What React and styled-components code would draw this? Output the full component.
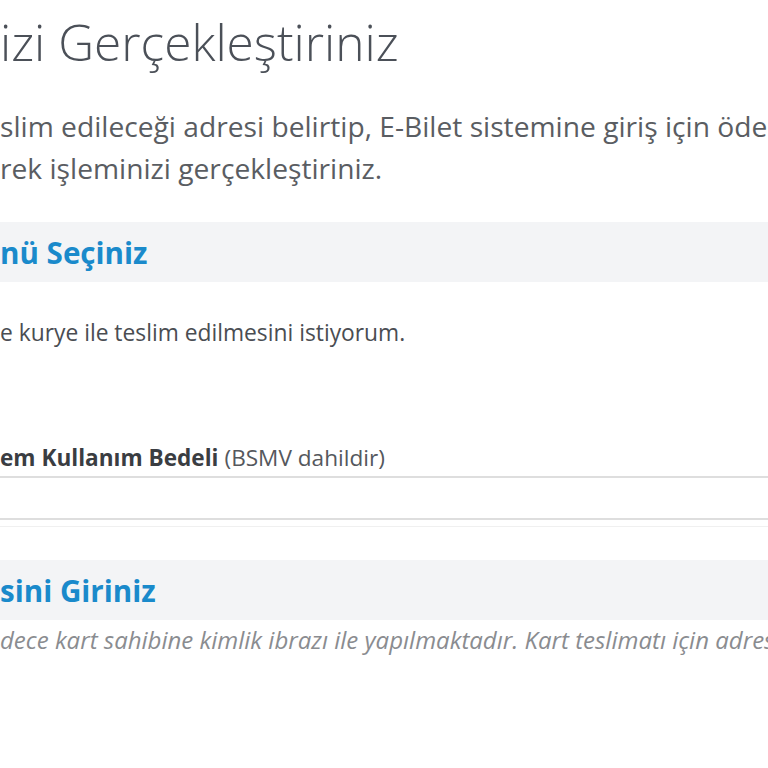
import styled, { createGlobalStyle } from 'styled-components'

const Global = createGlobalStyle`
  html, body { margin: 0; padding: 0; background: #fff; }
  body { font-family: "Open Sans", "Noto Sans", sans-serif; }
`;

const App = () => {
  return (
    <>
      <Global />
      <Page>
        <Title>izi Gerçekleştiriniz</Title>
        <Intro>
          slim edileceği adresi belirtip, E-Bilet sistemine giriş için ödeme
          <br />
          rek işleminizi gerçekleştiriniz.
        </Intro>

        <SectionBar $top={33}>nü Seçiniz</SectionBar>
        <Option>e kurye ile teslim edilmesini istiyorum.</Option>

        <FeeTable>
          <FeeRow $h={35}>
            <strong>em Kullanım Bedeli</strong> (BSMV dahildir)
          </FeeRow>
          <FeeRow $h={42} />
        </FeeTable>

        <SectionBar $top={33}>sini Giriniz</SectionBar>
        <Note>
          dece kart sahibine kimlik ibrazı ile yapılmaktadır. Kart teslimatı için adresinizi giriniz.
        </Note>
      </Page>
    </>
  );
};

// whole cropped page
const Page = styled.main`
  width: 768px;
  height: 768px;
  overflow: hidden;
  display: flex;
  flex-direction: column;
  white-space: nowrap;
`;

const Title = styled.h1`
  margin: 12px 0 0;
  font-size: 49.6px;
  line-height: 60px;
  font-weight: 300;
  color: #4b5058;
`;

const Intro = styled.p`
  margin: 33px 0 0;
  font-size: 28.2px;
  line-height: 42px;
  color: #5a5d62;
`;

const SectionBar = styled.h2`
  margin: ${p => p.$top}px 0 0;
  height: 60px;
  flex-shrink: 0;
  display: flex;
  align-items: center;
  background: #f3f4f6;
  font-size: 29.6px;
  font-weight: 700;
  color: #1a8acb;
`;

const Option = styled.div`
  margin-top: 36px;
  font-size: 22.8px;
  line-height: 30px;
  color: #4a4d52;
`;

const FeeTable = styled.div`
  margin-top: 95px;
  display: flex;
  flex-direction: column;
  border-bottom: 1px solid #f0f0f0;
  padding-bottom: 6px;
`;

const FeeRow = styled.div`
  height: ${p => p.$h}px;
  flex-shrink: 0;
  box-sizing: border-box;
  display: flex;
  align-items: flex-start;
  gap: 6px;
  font-size: 22.6px;
  line-height: 30px;
  color: #55585d;
  border-bottom: 2px solid #dedede;
  strong { color: #3a3d42; font-weight: 700; }
`;

const Note = styled.p`
  margin: 5px 0 0;
  font-size: 24px;
  line-height: 30px;
  font-style: italic;
  color: #8a8c90;
`;

export default App;
